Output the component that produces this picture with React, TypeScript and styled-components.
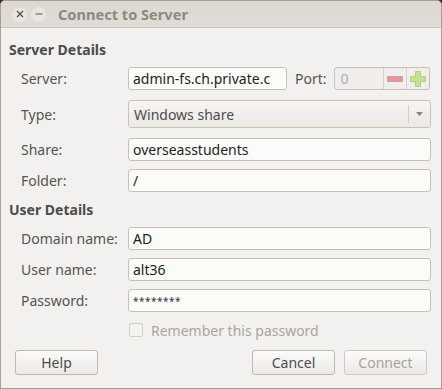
import styled, { createGlobalStyle } from "styled-components";

const GlobalStyle = createGlobalStyle`
  html, body {
    margin: 0;
    padding: 0;
    background: #4a2626;
  }
  body {
    font-family: "Noto Sans", "Open Sans", sans-serif;
  }
`;

const Window = styled.div`
  width: 440px;
  height: 387px;
  border: 1px solid #a89e94;
  border-radius: 5px 5px 0 0;
  background: #f2f1f0;
  display: flex;
  flex-direction: column;
  overflow: hidden;
`;

const TitleBar = styled.div`
  height: 26px;
  display: flex;
  align-items: center;
  padding-left: 11px;
  gap: 4px;
  background: linear-gradient(#dcd8d1, #e1ddd6);
  border-bottom: 1px solid #cbc4bb;
`;

const WinButton = styled.div`
  width: 15px;
  height: 15px;
  border-radius: 50%;
  background: #e9e6e1;
  display: flex;
  align-items: center;
  justify-content: center;
  color: #5a5854;
`;

const Title = styled.div`
  margin-left: 8px;
  margin-top: -1px;
  font-weight: bold;
  font-size: 14.6px;
  color: #8d8982;
`;

const Body = styled.div`
  padding: 12px 10px 0 8px;
  display: flex;
  flex-direction: column;
`;

const Heading = styled.div<{ $mt?: number }>`
  height: 20px;
  line-height: 20px;
  margin-top: ${(p) => p.$mt ?? 0}px;
  margin-bottom: 7px;
  font-weight: bold;
  font-size: 14px;
  color: #4c4c4c;
`;

const Row = styled.div<{ $h: number; $mt?: number }>`
  display: grid;
  grid-template-columns: 107px 1fr;
  align-items: center;
  height: ${(p) => p.$h}px;
  margin-top: ${(p) => p.$mt ?? 0}px;
  padding-left: 12px;
`;

const Label = styled.div`
  font-size: 14px;
  color: #555350;
`;

const Field = styled.div`
  display: flex;
  align-items: center;
  gap: 7px;
  height: 100%;
`;

const Entry = styled.div<{ $w?: number }>`
  box-sizing: border-box;
  height: 100%;
  ${(p) => (p.$w ? `width: ${p.$w}px; flex: none;` : "flex: 1;")}
  border: 1px solid #c7c0b7;
  border-radius: 3px;
  background: #fbfbfa;
  padding: 0 4px;
  display: flex;
  align-items: center;
  font-size: 14px;
  color: #222222;
  white-space: nowrap;
  overflow: hidden;
`;

const Dots = styled.span`
  font-size: 10px;
  letter-spacing: 0.5px;
  color: #333;
`;

const PortLabel = styled(Label)`
  margin-left: 1px;
`;

const Spin = styled.div`
  box-sizing: border-box;
  display: flex;
  height: 100%;
  width: 96px;
  flex: none;
  border: 1px solid #c7c0b7;
  border-radius: 3px;
  background: #efeeec;
  overflow: hidden;
`;

const SpinValue = styled.div`
  flex: 1;
  padding: 0 6px;
  display: flex;
  align-items: center;
  font-size: 14px;
  color: #a6b1ba;
`;

const SpinButton = styled.div`
  width: 22px;
  border-left: 1px solid #d7d2cb;
  display: flex;
  align-items: center;
  justify-content: center;
`;

const Combo = styled.div`
  box-sizing: border-box;
  flex: 1;
  height: 100%;
  border: 1px solid #c9c2b9;
  border-radius: 3px;
  background: linear-gradient(#f6f5f4, #ebe9e6);
  display: flex;
  align-items: center;
  padding-left: 5px;
  font-size: 14px;
  color: #4c4c4c;
`;

const ComboText = styled.div`
  flex: 1;
`;

const ComboArrow = styled.div`
  width: 21px;
  height: 18px;
  border-left: 1px solid #d4cec6;
  display: flex;
  align-items: center;
  justify-content: center;
`;

const CheckRow = styled.div`
  display: flex;
  align-items: center;
  gap: 8px;
  height: 18px;
  margin-top: 9px;
  padding-left: 120px;
  font-size: 14px;
  color: #aaa59e;
`;

const CheckBox = styled.div`
  box-sizing: border-box;
  width: 14px;
  height: 14px;
  border: 1px solid #d3cec7;
  border-radius: 2px;
  background: #f4f3f1;
`;

const ButtonBar = styled.div`
  display: flex;
  align-items: center;
  margin-top: 11px;
  padding: 0 4px 0 6px;
  gap: 9px;
`;

const Spacer = styled.div`
  flex: 1;
`;

const Button = styled.div<{ $disabled?: boolean }>`
  box-sizing: border-box;
  width: 83px;
  height: 25px;
  border: 1px solid ${(p) => (p.$disabled ? "#cfc9c1" : "#bfb8ae")};
  border-radius: 3px;
  background: linear-gradient(#fbfbfa, #ebe9e6);
  display: flex;
  align-items: center;
  justify-content: center;
  font-size: 14px;
  color: ${(p) => (p.$disabled ? "#a7a39c" : "#4c4c4c")};
`;

export default function App() {
  return (
    <>
      <GlobalStyle />
      <Window>
        <TitleBar>
          <WinButton>
            <svg width="8" height="8" viewBox="0 0 8 8">
              <path d="M1 1L7 7M7 1L1 7" stroke="#55534f" strokeWidth="1.4" />
            </svg>
          </WinButton>
          <WinButton>
            <svg width="8" height="8" viewBox="0 0 8 8">
              <path d="M0.5 4H7.5" stroke="#55534f" strokeWidth="1.2" />
            </svg>
          </WinButton>
          <Title>Connect to Server</Title>
        </TitleBar>
        <Body>
          <Heading>Server Details</Heading>
          <Row $h={23}>
            <Label>Server:</Label>
            <Field>
              <Entry $w={159}>admin-fs.ch.private.c</Entry>
              <PortLabel>Port:</PortLabel>
              <Spin>
                <SpinValue>0</SpinValue>
                <SpinButton>
                  <svg width="16" height="6" viewBox="0 0 16 6">
                    <rect x="0.3" y="0.3" width="15.4" height="5.4" rx="1" fill="#e3959a" stroke="#d9878c" strokeWidth="0.6" />
                  </svg>
                </SpinButton>
                <SpinButton>
                  <svg width="16" height="16" viewBox="0 0 16 16">
                    <path
                      d="M5.5 0.5H10.5V5.5H15.5V10.5H10.5V15.5H5.5V10.5H0.5V5.5H5.5Z"
                      fill="#c8df94"
                      stroke="#a8c46e"
                      strokeWidth="0.8"
                    />
                  </svg>
                </SpinButton>
              </Spin>
            </Field>
          </Row>
          <Row $h={28} $mt={10}>
            <Label>Type:</Label>
            <Field>
              <Combo>
                <ComboText>Windows share</ComboText>
                <ComboArrow>
                  <svg width="7" height="4" viewBox="0 0 7 4">
                    <path d="M0 0H7L3.5 4Z" fill="#8a8782" />
                  </svg>
                </ComboArrow>
              </Combo>
            </Field>
          </Row>
          <Row $h={23} $mt={10}>
            <Label>Share:</Label>
            <Field>
              <Entry>overseasstudents</Entry>
            </Field>
          </Row>
          <Row $h={23} $mt={8}>
            <Label>Folder:</Label>
            <Field>
              <Entry>/</Entry>
            </Field>
          </Row>
          <Heading $mt={8}>User Details</Heading>
          <Row $h={23}>
            <Label>Domain name:</Label>
            <Field>
              <Entry>AD</Entry>
            </Field>
          </Row>
          <Row $h={23} $mt={8}>
            <Label>User name:</Label>
            <Field>
              <Entry>alt36</Entry>
            </Field>
          </Row>
          <Row $h={23} $mt={8}>
            <Label>Password:</Label>
            <Field>
              <Entry>
                <Dots>********</Dots>
              </Entry>
            </Field>
          </Row>
          <CheckRow>
            <CheckBox />
            Remember this password
          </CheckRow>
          <ButtonBar>
            <Button>Help</Button>
            <Spacer />
            <Button>Cancel</Button>
            <Button $disabled>Connect</Button>
          </ButtonBar>
        </Body>
      </Window>
    </>
  );
}
